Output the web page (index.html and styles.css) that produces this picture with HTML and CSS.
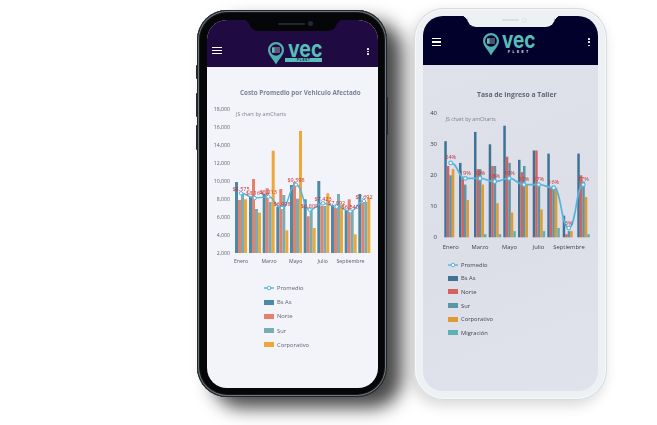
FILE: index.html
```html
<!DOCTYPE html>
<html lang="es">
<head>
<meta charset="utf-8">
<title>VEC Fleet</title>
<link rel="stylesheet" href="styles.css">
</head>
<body>
<main class="stage">
  <article class="phone phone-dark">
    <i class="side-btn side-a"></i><i class="side-btn side-b"></i><i class="side-btn side-c"></i><i class="side-btn side-d"></i>
    <div class="screen">
      <div class="notch"><i class="speaker"></i><i class="camera"></i></div>
      <header class="appbar">
        <span class="burger"><i></i><i></i><i></i></span>
        <svg class="logo" viewBox="0 0 56 24" aria-label="VEC Fleet">
          <path class="pin" d="M9 1a8 8 0 0 1 8 8c0 5-5 9-8 14.500c-3-5.500-8-9.500-8-14.500a8 8 0 0 1 8-8z"/>
          <circle class="pin-hole" cx="9" cy="9" r="5.800"/>
          <path class="pin-mark" d="M7 7h6M7 9h6M7 11h6"/>
          <rect class="pin-box" x="5" y="6.300" width="2.500" height="5.500"/>
          <text class="vec" x="21" y="16" textLength="34.500" lengthAdjust="spacingAndGlyphs">vec</text>
          <rect class="fleet-bar" x="18" y="17" width="37" height="4"/>
          <text class="fleet-dark" x="36.500" y="20.200">F L E E T</text>
        </svg>
        <span class="dots"><i></i><i></i><i></i></span>
      </header>
      <section class="content">
        <h2 class="title title-dark">Costo Promedio por Vehiculo Afectado</h2>
        <svg class="chart chart-dark" viewBox="0 0 171 163">
          <g transform="translate(-207 -105)">
            <text class="credit" x="236" y="116">JS chart by amCharts</text>
            <g class="ylab">
              <text x="230" y="111">18,000</text><text x="230" y="129">16,000</text><text x="230" y="147">14,000</text><text x="230" y="165">12,000</text><text x="230" y="183">10,000</text><text x="230" y="201">8,000</text><text x="230" y="219">6,000</text><text x="230" y="237">4,000</text><text x="230" y="255">2,000</text>
            </g>
            <g transform="translate(0 253) scale(1 -1)">
              <g class="d1"><rect x="235" width="3" height="71"/><rect x="249" width="3" height="56.700"/><rect x="262.700" width="3" height="59"/><rect x="276.300" width="3" height="46.300"/><rect x="290" width="3" height="68"/><rect x="303.700" width="3" height="53.700"/><rect x="317.300" width="3" height="72"/><rect x="331" width="3" height="48"/><rect x="344.700" width="3" height="43"/><rect x="358.300" width="3" height="59"/></g>
              <g class="d2"><rect x="238" width="3" height="53"/><rect x="252" width="3" height="74"/><rect x="265.700" width="3" height="64.700"/><rect x="279.300" width="3" height="64"/><rect x="293" width="3" height="71"/><rect x="306.700" width="3" height="36.700"/><rect x="320.300" width="3" height="47.300"/><rect x="334" width="3" height="45.300"/><rect x="347.700" width="3" height="53.700"/><rect x="361.300" width="3" height="50"/></g>
              <g class="d3"><rect x="241" width="3" height="59"/><rect x="255" width="3" height="44"/><rect x="268.700" width="3" height="51"/><rect x="282.300" width="3" height="58"/><rect x="296" width="3" height="54.300"/><rect x="309.700" width="3" height="43.700"/><rect x="323.300" width="3" height="47"/><rect x="337" width="3" height="59"/><rect x="350.700" width="3" height="42.300"/><rect x="364.300" width="3" height="51"/></g>
              <g class="d4"><rect x="244" width="3" height="53.700"/><rect x="258" width="3" height="40.300"/><rect x="271.700" width="3" height="102.300"/><rect x="285.300" width="3" height="22.700"/><rect x="299" width="3" height="122"/><rect x="312.700" width="3" height="25"/><rect x="326.300" width="3" height="59.700"/><rect x="340" width="3" height="48"/><rect x="353.700" width="3" height="18.700"/><rect x="367.300" width="3" height="55.300"/></g>
            </g>
            <path class="trend" d="M241 193.300C247.800 193.300 247.800 198 254.700 198S261.500 196.700 268.300 196.700S275 208 282 208S289 184.700 296 184.700S302.800 209.700 309.700 209.700S316.300 203.300 323 203.300S329.800 206.700 336.700 206.700S343.500 211.300 350.300 211.300S357 201 364 201"/>
            <g class="pts">
              <circle cx="241" cy="193.300" r="1.700"/><circle cx="254.700" cy="198" r="1.700"/><circle cx="268.300" cy="196.700" r="1.700"/><circle cx="282" cy="208" r="1.700"/><circle cx="296" cy="184.700" r="1.700"/><circle cx="309.700" cy="209.700" r="1.700"/><circle cx="323" cy="203.300" r="1.700"/><circle cx="336.700" cy="206.700" r="1.700"/><circle cx="350.300" cy="211.300" r="1.700"/><circle cx="364" cy="201" r="1.700"/>
            </g>
            <g class="vals">
              <text x="241" y="191">$8,575</text><text x="254.700" y="195">$8,164</text><text x="268.300" y="194">$8,213</text><text x="282" y="206">$6,998</text><text x="296" y="182">$9,598</text><text x="309.700" y="207.500">$6,809</text><text x="323" y="201">$7,423</text><text x="336.700" y="204.500">$7,092</text><text x="350.300" y="209">$6,540</text><text x="364" y="199">$7,692</text>
            </g>
            <g class="xlab">
              <text x="241" y="263">Enero</text><text x="269" y="263">Marzo</text><text x="295.700" y="263">Mayo</text><text x="322.700" y="263">Julio</text><text x="350.500" y="263">Septiembre</text>
            </g>
          </g>
        </svg>
        <ul class="legend legend-dark">
          <li><svg class="key" viewBox="0 0 10 6"><path class="trend" d="M0 3h10"/><circle class="pt" cx="5" cy="3" r="1.800"/></svg>Promedio</li>
          <li><i class="swatch d1"></i>Bs As</li>
          <li><i class="swatch d2"></i>Norte</li>
          <li><i class="swatch d3"></i>Sur</li>
          <li><i class="swatch d4"></i>Corporativo</li>
        </ul>
      </section>
    </div>
  </article>

  <article class="phone phone-light">
    <div class="screen">
      <div class="notch"><i class="speaker"></i><i class="camera"></i></div>
      <header class="appbar">
        <span class="burger"><i></i><i></i><i></i></span>
        <svg class="logo" viewBox="0 0 56 24" aria-label="VEC Fleet">
          <path class="pin" d="M9 1a8 8 0 0 1 8 8c0 5-5 9-8 14.500c-3-5.500-8-9.500-8-14.500a8 8 0 0 1 8-8z"/>
          <circle class="pin-hole" cx="9" cy="9" r="5.800"/>
          <path class="pin-mark" d="M7 7h6M7 9h6M7 11h6"/>
          <rect class="pin-box" x="5" y="6.300" width="2.500" height="5.500"/>
          <text class="vec" x="20" y="15.500" textLength="33.500" lengthAdjust="spacingAndGlyphs">vec</text>
          <text class="fleet-light" x="36.500" y="20.500">F L E E T</text>
        </svg>
        <span class="dots"><i></i><i></i><i></i></span>
      </header>
      <section class="content">
        <h2 class="title title-light">Tasa de Ingreso a Taller</h2>
        <svg class="chart chart-light" viewBox="0 0 175 145">
          <g transform="translate(-423 -105)">
            <text class="credit" x="445.700" y="121">JS chart by amCharts</text>
            <g class="ylab">
              <text x="437" y="115">40</text><text x="437" y="146">30</text><text x="437" y="177">20</text><text x="437" y="208">10</text><text x="437" y="239">0</text>
            </g>
            <g transform="translate(0 237.300) scale(1 -3.100)">
              <g class="e1"><rect x="444.300" width="2.500" height="31"/><rect x="459" width="2.500" height="24"/><rect x="474" width="2.500" height="34"/><rect x="488.700" width="2.500" height="30"/><rect x="503.300" width="2.500" height="36"/><rect x="518" width="2.500" height="25"/><rect x="532.700" width="2.500" height="28"/><rect x="547.300" width="2.500" height="27"/><rect x="562.700" width="2.500" height="7"/><rect x="577.300" width="2.500" height="27"/></g>
              <g class="e2"><rect x="446.800" width="2.500" height="23"/><rect x="461.500" width="2.500" height="19"/><rect x="476.500" width="2.500" height="22"/><rect x="491.200" width="2.500" height="23"/><rect x="505.800" width="2.500" height="26"/><rect x="520.500" width="2.500" height="21"/><rect x="535.200" width="2.500" height="28"/><rect x="549.800" width="2.500" height="16"/><rect x="565.200" width="2.500" height="1"/><rect x="579.800" width="2.500" height="20"/></g>
              <g class="e3"><rect x="449.300" width="2.500" height="20"/><rect x="464" width="2.500" height="17"/><rect x="479" width="2.500" height="22"/><rect x="493.700" width="2.500" height="23"/><rect x="508.300" width="2.500" height="24"/><rect x="523" width="2.500" height="23"/><rect x="537.700" width="2.500" height="17"/><rect x="552.300" width="2.500" height="16"/><rect x="567.700" width="2.500" height="2"/><rect x="582.300" width="2.500" height="18"/></g>
              <g class="e4"><rect x="451.800" width="2.500" height="22"/><rect x="466.500" width="2.500" height="12"/><rect x="481.500" width="2.500" height="17"/><rect x="496.200" width="2.500" height="11"/><rect x="510.800" width="2.500" height="8"/><rect x="525.500" width="2.500" height="17"/><rect x="540.200" width="2.500" height="9"/><rect x="554.800" width="2.500" height="16"/><rect x="570.200" width="2.500" height="2"/><rect x="584.800" width="2.500" height="13"/></g>
              <g class="e5"><rect x="484" width="2.500" height="1"/><rect x="498.700" width="2.500" height="1"/><rect x="513.300" width="2.500" height="2"/><rect x="542.700" width="2.500" height="2"/><rect x="557.300" width="2.500" height="3"/><rect x="587.300" width="2.500" height="1"/></g>
            </g>
            <path class="trend" d="M450.700 162.900C458 162.900 458 178.400 465.300 178.400S472.700 178.400 480 178.400S487.300 181.500 494.700 181.500S502 178.400 509.300 178.400S516.700 184.600 524 184.600S531.300 184.600 538.700 184.600S546.200 187.700 553.700 187.700S561.200 228 568.700 228S576 184.600 583.300 184.600"/>
            <g class="pts">
              <circle cx="450.700" cy="162.900" r="1.800"/><circle cx="465.300" cy="178.400" r="1.800"/><circle cx="480" cy="178.400" r="1.800"/><circle cx="494.700" cy="181.500" r="1.800"/><circle cx="509.300" cy="178.400" r="1.800"/><circle cx="524" cy="184.600" r="1.800"/><circle cx="538.700" cy="184.600" r="1.800"/><circle cx="553.700" cy="187.700" r="1.800"/><circle cx="568.700" cy="228" r="1.800"/><circle cx="583.300" cy="184.600" r="1.800"/>
            </g>
            <g class="vals">
              <text x="450.700" y="159">24%</text><text x="465.300" y="175">19%</text><text x="480" y="175">19%</text><text x="494.700" y="178">18%</text><text x="509.300" y="175">19%</text><text x="524" y="181">17%</text><text x="538.700" y="181">17%</text><text x="553.700" y="184">16%</text><text x="568.700" y="225">3%</text><text x="583.300" y="181">17%</text>
            </g>
            <g class="xlab">
              <text x="450.700" y="249">Enero</text><text x="480" y="249">Marzo</text><text x="509.500" y="249">Mayo</text><text x="538.500" y="249">Julio</text><text x="569" y="249">Septiembre</text>
            </g>
          </g>
        </svg>
        <ul class="legend legend-light">
          <li><svg class="key" viewBox="0 0 10 6"><path class="trend" d="M0 3h10"/><circle class="pt" cx="5" cy="3" r="1.800"/></svg>Promedio</li>
          <li><i class="swatch e1"></i>Bs As</li>
          <li><i class="swatch e2"></i>Norte</li>
          <li><i class="swatch e3"></i>Sur</li>
          <li><i class="swatch e4"></i>Corporativo</li>
          <li><i class="swatch e5"></i>Migración</li>
        </ul>
      </section>
    </div>
  </article>
</main>
</body>
</html>
```

FILE: styles.css
```css
* { box-sizing: border-box; }

html, body {
  margin: 0;
  padding: 0;
  background: #fff;
  overflow: hidden;
}

.stage {
  position: relative;
  width: 657px;
  height: 425px;
  overflow: hidden;
  font-family: "Open Sans", "Noto Sans", sans-serif;
}

/* Phones sit on a free canvas */
.phone {
  position: absolute;
  display: flex;
}

.phone-dark {
  left: 197px;
  top: 10px;
  width: 190px;
  height: 387px;
  padding: 10px 9px 9px 10px;
  border-radius: 30px;
  background: #050608;
  box-shadow:
    inset 0 0 0 1px #20262a,
    inset 0 0 0 2px #6f777c,
    inset 0 0 0 3px #14181b,
    15px 11px 18px rgba(0, 0, 0, .72);
}

.phone-light {
  left: 414px;
  top: 8px;
  width: 193px;
  height: 392px;
  padding: 8px 9px 9px;
  border-radius: 30px;
  background: #eef1f3;
  box-shadow:
    inset 0 0 0 1px #d5dbde,
    inset 0 0 0 2px #f7f9fa,
    -3px 5px 14px rgba(0, 0, 0, .16);
}

.side-btn {
  position: absolute;
  width: 2px;
  background: #23282c;
  border-radius: 1px;
}
.side-a { left: -1px; top: 55px; height: 14px; }
.side-b { left: -1px; top: 83px; height: 24px; }
.side-c { left: -1px; top: 115px; height: 25px; }
.side-d { right: -1px; top: 87px; height: 38px; }

.screen {
  position: relative;
  flex: 1;
  display: flex;
  flex-direction: column;
  border-radius: 20px;
  overflow: hidden;
  filter: blur(.45px);
}
.phone-dark .screen { background: #f3f4fa; }
.phone-light .screen { background: linear-gradient(160deg, #dfe2ea, #dcdfe8 60%, #e0e3eb); }

.notch {
  position: absolute;
  left: 50%;
  top: 0;
  display: flex;
  align-items: center;
  justify-content: center;
  gap: 3px;
  border-radius: 0 0 9px 9px;
}
.notch::before,
.notch::after {
  content: "";
  position: absolute;
  top: 0;
  width: 5px;
  height: 5px;
}
.notch::before { left: -5px; }
.notch::after { right: -5px; }
.phone-dark .notch {
  width: 88px;
  height: 10.500px;
  margin-left: -44px;
  background: #050608;
  padding: 0 0 3px 6px;
}
.phone-dark .notch::before { background: radial-gradient(circle at 0 100%, transparent 4.700px, #050608 5px); }
.phone-dark .notch::after { background: radial-gradient(circle at 100% 100%, transparent 4.700px, #050608 5px); }
.phone-light .notch {
  width: 88px;
  height: 11px;
  margin-left: -44px;
  background: #eef1f3;
  padding: 0 0 3px 8px;
}
.phone-light .notch::before { background: radial-gradient(circle at 0 100%, transparent 4.700px, #eef1f3 5px); }
.phone-light .notch::after { background: radial-gradient(circle at 100% 100%, transparent 4.700px, #eef1f3 5px); }

.speaker { width: 27px; height: 2px; border-radius: 1px; }
.camera { width: 5px; height: 5px; border-radius: 50%; }
.phone-dark .speaker { background: #23262b; }
.phone-dark .camera { background: #1d2a3a; }
.phone-light .speaker { width: 17px; background: #dcdfe2; }
.phone-light .camera { background: none; border: 1px solid #dfe3e6; }

.appbar {
  display: flex;
  align-items: flex-start;
  justify-content: space-between;
  flex: none;
}
.phone-dark .appbar {
  height: 47px;
  padding: 21px 9px 0 5px;
  background: #1f0a42;
}
.phone-light .appbar {
  height: 49px;
  padding: 16px 8px 0 9px;
  background: #02012b;
}

.burger {
  display: flex;
  flex-direction: column;
}
.burger i { display: block; background: #fff; height: 1.300px; }
.phone-dark .burger { width: 10px; gap: 1.700px; margin-top: 6px; }
.phone-light .burger { width: 11px; gap: 2.200px; margin-top: 6px; }

.dots {
  display: flex;
  flex-direction: column;
  gap: 1px;
}
.dots i { display: block; width: 1.700px; height: 1.700px; background: #fff; border-radius: 50%; }
.phone-dark .dots { margin-top: 7px; }
.phone-light .dots { margin-top: 6px; gap: 1.600px; }

.logo { display: block; width: 56px; height: 24px; overflow: visible; }
.phone-dark .logo { margin: 0 33px 0 33px; }
.phone-light .logo { margin: 0 50px 0 41px; }

.pin { fill: #4fb0ad; }
.pin-hole { fill: #1f0a42; }
.phone-light .pin-hole { fill: #02012b; }
.pin-mark { fill: none; stroke: #cfe9e7; stroke-width: .7; }
.pin-box { fill: #5cc0bb; }
.vec {
  font-family: Inter, "Liberation Sans", sans-serif;
  font-size: 23px;
  font-weight: 700;
  fill: #57bdb8;
}
.fleet-bar { fill: #57bdb8; }
.fleet-dark, .fleet-light {
  font-family: "Liberation Sans", sans-serif;
  font-size: 3px;
  font-weight: 700;
  text-anchor: middle;
}
.fleet-dark { fill: #1f0a42; }
.fleet-light { fill: #fff; letter-spacing: .9px; }

.content {
  flex: 1;
  display: flex;
  flex-direction: column;
}

.title {
  margin: 0;
  font-size: 6.300px;
  line-height: 10px;
  font-weight: 700;
  white-space: nowrap;
}
.title-dark { padding: 21px 0 7px 33px; color: #7b8097; }
.title-light { padding: 25px 0 5px 54px; color: #5f6579; font-size: 6.800px; }

.chart { display: block; flex: none; overflow: visible; }
.chart-dark { width: 171px; height: 163px; }
.chart-light { width: 175px; height: 145px; }

.credit { font-size: 5.200px; fill: #7d8088; }
.ylab text { font-size: 5.200px; text-anchor: end; fill: #5c6068; }
.chart-light .ylab text { font-size: 6px; fill: #3c4048; }
.xlab text { font-size: 5.200px; text-anchor: middle; fill: #555a62; }
.chart-light .xlab text { font-size: 5.800px; fill: #3c4048; }
.vals text { font-size: 5.500px; text-anchor: middle; fill: #bf2f3a; }

.d1 { fill: #4a8aa5; background: #4a8aa5; }
.d2 { fill: #e5806f; background: #e5806f; }
.d3 { fill: #78aeb2; background: #78aeb2; }
.d4 { fill: #f0a73a; background: #f0a73a; }
.e1 { fill: #3f7396; background: #3f7396; }
.e2 { fill: #d4635f; background: #d4635f; }
.e3 { fill: #5a96a6; background: #5a96a6; }
.e4 { fill: #e09a30; background: #e09a30; }
.e5 { fill: #5fb0b5; background: #5fb0b5; }

.trend { fill: none; stroke: #56b4dc; stroke-width: 1.400; }
.chart-light .trend { stroke-width: 1.700; }
.pts circle, .pt { fill: #fff; stroke: #56b4dc; stroke-width: 1; }
.chart-light .pts circle { stroke-width: 1.200; }

.legend {
  list-style: none;
  margin: 0;
  display: flex;
  flex-direction: column;
}
.legend li {
  display: flex;
  align-items: center;
  gap: 3px;
  white-space: nowrap;
}
.legend-dark { margin-top: 13px; padding: 0 0 0 57px; font-size: 5.800px; color: #5f636c; }
.legend-dark li { height: 14.200px; }
.legend-light { margin-top: 8px; padding: 0 0 0 25px; font-size: 5.800px; color: #3f4450; }
.legend-light li { height: 13.600px; }

.key { display: block; width: 10px; height: 6px; flex: none; overflow: visible; }
.swatch { display: block; width: 10px; height: 5px; flex: none; }
```
